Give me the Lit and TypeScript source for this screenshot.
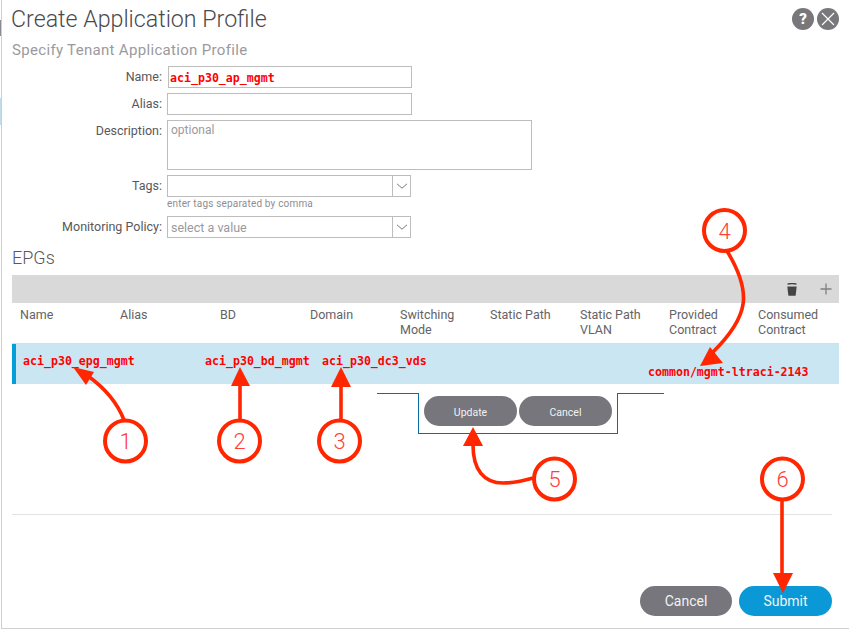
import { LitElement, html, css, svg } from "lit";
import { customElement } from "lit/decorators.js";

const HEADERS: [string, string?][] = [
  ["Name"], ["Alias"], ["BD"], ["Domain"], ["Switching", "Mode"],
  ["Static Path"], ["Static Path", "VLAN"], ["Provided", "Contract"], ["Consumed", "Contract"],
];

const chevron = html`<svg class="chev" width="12" height="6" viewBox="0 0 12 6"><path d="M1 .8 6 5.2 11 .8" fill="none" stroke="#77787c" stroke-width="1"/></svg>`;

const callouts: [number, number, string][] = [
  [125.5, 441, "1"], [239.5, 441, "2"], [339.5, 441, "3"], [724.5, 230.5, "4"], [554.5, 479, "5"], [782.5, 479, "6"],
];

const shafts = [
  "M124 420C117 402 106 389 88 376",
  "M240 420V385",
  "M341 420V385",
  "M727 251C752 292 750 316 712 353",
  "M473 445C473 470 484 483 503 483C514 483 523 481 533 478",
  "M782 500V575",
];
const heads = [
  "73,367 94,372 86,385",
  "240,367 231,386 250,386",
  "341,367 331,387 351,387",
  "700,366 710,347 723,363",
  "473,427 463,446 483,446",
  "783,593 773,573 793,573",
];

@customElement("app-root")
export class AppRoot extends LitElement {
  static styles = css`
    :host { display: block; width: 849px; height: 630px; position: relative; overflow: hidden; font-family: Roboto, "Open Sans", sans-serif; color: #58585b;
      background: linear-gradient(#8a8a90, #8a8a90) 0 20px / 1px 16px no-repeat, linear-gradient(#c0dcea, #c0dcea) 0 98px / 1px 27px no-repeat, #fff; }
    .dialog { box-sizing: border-box; width: 848px; height: 629px; margin-left: 1px; border-left: 1px solid #cfcfcf; border-bottom: 1px solid #cfcfcf; padding: 0 10px; display: flex; flex-direction: column; }
    .head { display: flex; align-items: center; height: 37px; margin-left: -1px; }
    h1 { flex: 1; margin: 0; font-size: 23.2px; font-weight: 300; color: #4a4a4d; white-space: nowrap; }
    .round { width: 22px; height: 22px; border-radius: 50%; background: #77777c; color: #fff; display: flex; align-items: center; justify-content: center; font-size: 15px; font-weight: 900; margin-left: 3px; }
    h2 { margin: 3px 0 0; font-size: 15px; line-height: 20px; font-weight: 400; letter-spacing: .32px; color: #9a9a9e; white-space: nowrap; }
    .form { display: grid; grid-template-columns: 150px auto; column-gap: 5px; row-gap: 5px; margin-top: 6px; justify-items: start; }
    label { justify-self: end; font-size: 12.5px; line-height: 21px; color: #58585b; white-space: nowrap; }
    .field { box-sizing: border-box; height: 22px; width: 245px; border: 1px solid #bdbdbd; background: #fff; padding: 0 3px; margin: 0; outline: none; border-radius: 0; font-family: inherit; font-size: 12px; display: block; }
    .field.red { margin-left: 1px; width: 244px; padding: 1px 1px 0; font: bold 11.6px "DejaVu Sans Mono", monospace; color: #ff0000; }
    textarea.field { width: 365px; height: 50px; resize: none; padding: 2px 3px 0; line-height: 15px; }
    textarea::placeholder { color: #9a9a9e; opacity: 1; }
    .select { box-sizing: border-box; height: 22px; width: 244px; border: 1px solid #bdbdbd; display: flex; align-items: center; font-size: 12.5px; color: #9a9a9e; }
    .select .v { flex: 1; padding-left: 3px; }
    .select .b { width: 17px; height: 100%; border-left: 1px solid #bdbdbd; display: flex; align-items: center; justify-content: center; }
    .hint { grid-column: 2; font-size: 10px; letter-spacing: .18px; line-height: 12px; color: #8e8e92; margin: -4px 0 1px; height: 12px; }
    h3 { margin: 5px 0 0; font-size: 18px; line-height: 29px; font-weight: 300; color: #58585b; height: 32px; }
    .bar { height: 28px; background: #d9d9d9; display: flex; align-items: center; justify-content: flex-end; gap: 22px; padding-right: 7px; }
    .cols { display: grid; grid-template-columns: 100px 100px 90px 90px 90px 90px 89px 89px 81px; padding: 4px 0 0 8px; height: 36px; border-bottom: 1px solid #dcdcdc; font-size: 12.5px; line-height: 15px; color: #636366; }
    .row { box-sizing: border-box; height: 40px; background: #cbe6f3; border-left: 4px solid #049fd9; display: grid; grid-template-columns: 182px 117px 326px auto; padding-left: 7px; font: bold 11.6px/14px "DejaVu Sans Mono", monospace; color: #ff0000; white-space: nowrap; }
    .row span { padding-top: 10px; }
    .row .low { padding-top: 21px; }
    .edit { display: flex; margin: 9px 0 0 365px; height: 41px; }
    .stub { border-top: 1px solid #0a6ea4; }
    .stub.l { width: 41px; }
    .stub.r { width: 46px; }
    .box { box-sizing: border-box; width: 200px; border: 1px solid #0a6ea4; border-top: 0; display: flex; gap: 2px; padding: 3px 0 0 5px; }
    .btn { border: 0; margin: 0; padding: 0; height: 30px; border-radius: 15px; background: #76767c; color: #f2f2f2; font-family: inherit; font-size: 10.5px; width: 93px; }
    .box .btn { padding-top: 2px; }
    .rule { height: 1px; background: #e3e3e3; margin-top: 80px; width: 820px; }
    .foot { display: flex; justify-content: flex-end; gap: 7px; margin-top: 71px; margin-right: 7px; }
    .foot .btn { font-size: 14px; width: 92px; }
    .foot .btn.primary { background: #0a99d6; width: 93px; }
    .marks { position: absolute; inset: 0; pointer-events: none; }
    .marks text { font: 300 22px Roboto, sans-serif; fill: #ff4038; text-anchor: middle; }
  `;

  render() {
    return html`
      <div class="dialog">
        <div class="head">
          <h1>Create Application Profile</h1>
          <div class="round">?</div>
          <div class="round"><svg width="16" height="16" viewBox="0 0 16 16"><path d="M2 2 14 14M14 2 2 14" stroke="#fff" stroke-width="1.2"/></svg></div>
        </div>
        <h2>Specify Tenant Application Profile</h2>
        <div class="form">
          <label>Name:</label><input class="field red" value="aci_p30_ap_mgmt" />
          <label>Alias:</label><input class="field" />
          <label>Description:</label><textarea class="field" placeholder="optional"></textarea>
          <label>Tags:</label><div class="select"><span class="v"></span><span class="b">${chevron}</span></div>
          <div class="hint">enter tags separated by comma</div>
          <label>Monitoring Policy:</label><div class="select"><span class="v">select a value</span><span class="b">${chevron}</span></div>
        </div>
        <h3>EPGs</h3>
        <div class="bar">
          <svg width="12" height="13" viewBox="0 0 12 13"><path d="M1.5 1.2Q6 -.2 10.5 1.2" fill="none" stroke="#444" stroke-width="1.4"/><path d="M1.3 3.4H10.7L9.6 12.8H2.4Z" fill="#444"/></svg>
          <svg width="12" height="12" viewBox="0 0 12 12"><path d="M6 .5V11.5M.5 6H11.5" stroke="#808084" stroke-width="1.3"/></svg>
        </div>
        <div class="cols">
          ${HEADERS.map(([a, b]) => html`<div>${a}${b ? html`<br />${b}` : ""}</div>`)}
        </div>
        <div class="row">
          <span>aci_p30_epg_mgmt</span><span>aci_p30_bd_mgmt</span><span>aci_p30_dc3_vds</span><span class="low">common/mgmt-ltraci-2143</span>
        </div>
        <div class="edit">
          <div class="stub l"></div>
          <div class="box"><button class="btn">Update</button><button class="btn">Cancel</button></div>
          <div class="stub r"></div>
        </div>
        <div class="rule"></div>
        <div class="foot">
          <button class="btn">Cancel</button>
          <button class="btn primary">Submit</button>
        </div>
      </div>
      <svg class="marks" width="849" height="630" viewBox="0 0 849 630">
        ${shafts.map((d) => svg`<path d=${d} fill="none" stroke="#ff2600" stroke-width="3.6"/>`)}
        ${heads.map((p) => svg`<polygon points=${p} fill="#ff2600"/>`)}
        ${callouts.map(([x, y, n]) => svg`<circle cx=${x} cy=${y} r="20.5" fill="#fff" stroke="#ff2600" stroke-width="4"/><text x=${x} y=${y + 8}>${n}</text>`)}
      </svg>
    `;
  }
}
